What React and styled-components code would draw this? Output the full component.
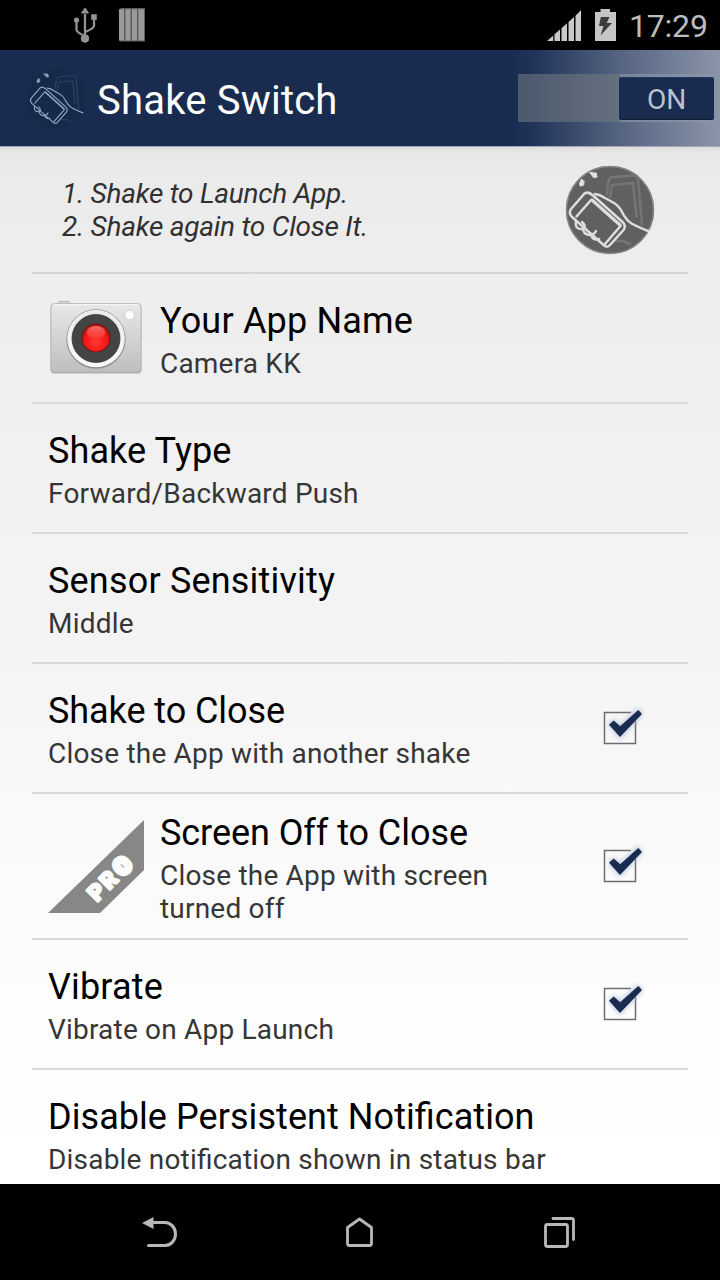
import React from 'react';
import styled, { createGlobalStyle } from 'styled-components';

const GlobalStyle = createGlobalStyle`
  * { box-sizing: border-box; }
  body { margin: 0; background: #000; }
  svg { display: block; flex: none; }
`;

const Screen = styled.div`
  width: 720px;
  height: 1280px;
  overflow: hidden;
  display: flex;
  flex-direction: column;
  font-family: Roboto, "Noto Sans", sans-serif;
  font-feature-settings: "liga" 1;
  background: #000;
`;

const StatusBar = styled.header`
  height: 50px;
  flex: none;
  display: flex;
  align-items: center;
  justify-content: space-between;
  padding: 0 12px 0 73px;
`;

const StatusGroup = styled.div`
  display: flex;
  align-items: center;
  gap: ${(p) => p.$gap}px;
`;

const Clock = styled.span`
  color: #bdbdbd;
  font-size: 32px;
  line-height: 48px;
  padding-top: 2px;
  width: 79px;
  white-space: nowrap;
  letter-spacing: -0.2px;
`;

const ActionBar = styled.div`
  height: 97px;
  flex: none;
  display: flex;
  align-items: center;
  background: #192c50;
  border-bottom: 1px solid #a3a5b4;
`;

const AppIcon = styled.div`
  margin-left: 24px;
  width: 64px;
  height: 64px;
`;

const AppTitle = styled.h1`
  margin: 6px 0 0 9px;
  flex: 1;
  color: #fff;
  font-size: 40px;
  font-weight: 400;
  line-height: 48px;
  white-space: nowrap;
  letter-spacing: 0.2px;
`;

const SwitchArea = styled.div`
  width: 208px;
  height: 96px;
  display: flex;
  align-items: center;
  padding-left: 6px;
  background: linear-gradient(90deg, #192c50 0%, #203358 10%, #536280 50%, #8b95a9 100%);
`;

const SwitchTrack = styled.div`
  width: 196px;
  height: 48px;
  display: flex;
  justify-content: flex-end;
  align-items: center;
  background: linear-gradient(90deg, #4b586d, #66717f 52%, #78859b 52%, #8b95a9);
`;

const SwitchThumb = styled.div`
  width: 95px;
  height: 43px;
  border-radius: 3px;
  background: #192c50;
  box-shadow: inset 0 -1px 0 #0f1c37, inset 0 1px 0 #213661;
  color: #bcc3cf;
  font-size: 28px;
  line-height: 46px;
  text-align: center;
`;

const Content = styled.main`
  flex: 1;
  min-height: 0;
  overflow: hidden;
  padding: 0 32px;
  background: linear-gradient(180deg, #dededf 0, #e8e8e8 6px, #ebebeb 30px, #f0f0f0 25%, #f4f4f4 48%, #f9f9f9 64%, #fdfdfd 82%, #fff 100%);
`;

const Intro = styled.section`
  height: 127px;
  display: flex;
  align-items: center;
  justify-content: space-between;
  padding: 0 32px 0 30px;
  border-bottom: 2px solid #d4d4d4;
`;

const IntroText = styled.p`
  margin: 0;
  color: #303030;
  font-size: 28px;
  font-style: italic;
  line-height: 33px;
  white-space: pre;
  letter-spacing: -0.25px;
`;

const Row = styled.section`
  height: ${(p) => p.$height || 130}px;
  display: flex;
  align-items: center;
  padding: 0 44px 0 16px;
  border-bottom: 2px solid #d9d9d9;
`;

const RowIcon = styled.div`
  width: 96px;
  height: 96px;
  margin-right: 16px;
  flex: none;
`;

const RowText = styled.div`
  flex: 1;
  min-width: 0;
  padding-top: ${(p) => p.$top ?? 2}px;
`;

const RowTitle = styled.h2`
  margin: 0;
  color: #000;
  font-size: 36px;
  font-weight: 400;
  line-height: 48px;
  white-space: nowrap;
  letter-spacing: ${(p) => p.$track || 0}px;
`;

const RowSummary = styled.p`
  margin: 0;
  color: #363636;
  font-size: 28px;
  line-height: 33px;
  padding: 2px 0;
  white-space: pre;
  letter-spacing: 0.2px;
`;

const NavBar = styled.nav`
  height: 96px;
  flex: none;
  display: flex;
  align-items: center;
  justify-content: space-between;
  padding: 0 136px 2px;
`;

const UsbIcon = () => (
  <svg width="24" height="36" viewBox="0 0 24 36" fill="#939393" stroke="#939393">
    <path d="M12 31V7M12 29Q4.500 26 3.500 23V13M12 25Q20 22 21 19V10" fill="none" stroke="#939393" strokeWidth="2.3" />
    <path d="M12 1l3.500 5h-7z" />
    <circle cx="12" cy="31.500" r="3.800" />
    <circle cx="3.500" cy="13" r="2.600" stroke="none" />
    <path d="M18.500 7.500h5v5h-5z" strokeWidth=".6" />
  </svg>
);

const BarsIcon = () => (
  <svg width="27" height="34" viewBox="0 0 27 34">
    <path d="M0 1.500L2 0h24v33.500H1.500L0 32z" fill="#5c5c5c" />
    <path d="M0 1.200h5v31.300H0zM6.500 1.200h5v31.300h-5zM13 1.200h5v31.300h-5zM19.500 1.200h5.500v31.300h-5.500z" fill="#999" />
  </svg>
);

const SignalIcon = () => (
  <svg width="35" height="31" viewBox="0 0 35 31" fill="#c9c9c9">
    <path d="M0 31L6.200 25.500V31zM7.500 31V24.300l5.500-4.800V31zM14.500 31V18.200L20 13.300V31zM21.500 31V12L27 7.100V31zM28.500 31V5.800L34 0v31z" />
  </svg>
);

const BatteryIcon = () => (
  <svg width="21" height="32" viewBox="0 0 21 32">
    <path d="M0 3h5.500V0h9.500v3H21v29H0z" fill="#c6c6c6" />
    <path d="M5.800 8h8.700l-2.800 6H17L5.500 26.500l3-9.500H4z" fill="#3c3c3c" />
  </svg>
);

const HandDrawing = ({ line, ghost, w }) => (
  <g fill="none" stroke={line} strokeLinecap="round" strokeLinejoin="round" strokeWidth={w}>
    <g stroke={ghost}>
      <path d="M43 30L44.500 17q.5-3.500 4-4L70 11.500q3.500 0 4 4L78 61M48 21l21-2M69 19l3.500 34M48 21l-2 12" />
      <path d="M51 77h8l7 3" />
    </g>
    <path d="M20.500 29.500L7 45q-2.500 4 .5 7.500L39 80.500q4 4 7 .5L59.500 66q3-4-1-8L29 31.500q-4.500-4.500-8.500-2z" />
    <path d="M27 36L12.500 52.500M56.500 62L41 80" />
    <path d="M28 36L56 61" strokeWidth={w * 1.3} />
    <path d="M31 30q5 .5 10 4l9 5q5 3 8 9 4 8 9.500 11.500Q74 63 84 67" />
    <path d="M12 57q-1.500 9 7 8 4-3-1-7M19 64q0 6 6 7 5 0 7-4M27 70q1 7 8 5" />
    <path d="M15.500 20l2-4.500 2.500 2-.5 3.500-3 1zM26 8.500l6 .5 1 4-3 .5z" fill={line} strokeWidth={w / 2} />
  </g>
);

const HeaderHand = () => (
  <svg width="64" height="64" viewBox="0 0 64 64">
    <circle cx="33" cy="33" r="30" fill="#172949" />
    <g transform="translate(2.500 2) scale(.67)">
      <HandDrawing line="#8ea5c8" ghost="#2b4168" w={1.700} />
    </g>
  </svg>
);

const GreyHand = () => (
  <svg width="92" height="92" viewBox="0 0 92 92">
    <circle cx="46" cy="46" r="44" fill="#606060" />
    <circle cx="46" cy="46" r="43.500" fill="none" stroke="#858585" strokeWidth="1.500" />
    <HandDrawing line="#dedede" ghost="#757575" w={2.500} />
  </svg>
);

const CameraIcon = () => (
  <svg width="96" height="96" viewBox="0 0 96 96">
    <defs>
      <linearGradient id="body" x1="0" y1="0" x2="0" y2="1">
        <stop offset="0" stopColor="#e8e8e8" />
        <stop offset="1" stopColor="#bebebe" />
      </linearGradient>
      <linearGradient id="ring" x1="0" y1="0" x2="0" y2="1">
        <stop offset="0" stopColor="#e9e9e9" />
        <stop offset="1" stopColor="#fbfbfb" />
      </linearGradient>
      <radialGradient id="lens" cx=".5" cy=".65" r=".6">
        <stop offset="0" stopColor="#ff3b30" />
        <stop offset=".65" stopColor="#f5181a" />
        <stop offset="1" stopColor="#bb1014" />
      </radialGradient>
      <linearGradient id="shine" x1="0" y1="0" x2="0" y2="1">
        <stop offset="0" stopColor="#ff9085" stopOpacity=".75" />
        <stop offset="1" stopColor="#ff6a60" stopOpacity=".2" />
      </linearGradient>
    </defs>
    <rect x="10" y="11.500" width="12" height="4" rx="2" fill="#d8d8d8" stroke="#aaa" strokeWidth=".8" />
    <rect x="2.500" y="14" width="91" height="69.500" rx="3.500" fill="#b0b0b0" />
    <rect x="3" y="13.500" width="90" height="68.500" rx="3.500" fill="url(#body)" stroke="#b4b4b4" strokeWidth=".8" />
    <path d="M6 14.700h84" stroke="#f8f8f8" />
    <circle cx="48" cy="49" r="29.700" fill="#8e8e8e" />
    <circle cx="48" cy="48.500" r="28.800" fill="url(#ring)" />
    <circle cx="48" cy="48.500" r="24" fill="#434545" stroke="#363636" strokeWidth=".8" />
    <circle cx="48" cy="48" r="14.500" fill="#6b1518" />
    <circle cx="48" cy="48" r="13.600" fill="url(#lens)" />
    <ellipse cx="48" cy="42.500" rx="9.500" ry="6.500" fill="url(#shine)" />
    <circle cx="81.500" cy="25" r="5" fill="#fbfbfb" stroke="#c4c4c4" strokeWidth=".8" />
  </svg>
);

const ProIcon = () => (
  <svg width="96" height="96" viewBox="0 0 96 96">
    <path d="M0 95L96 2v50L52 95z" fill="#878787" />
    <text
      transform="translate(49 84.500) rotate(-45)"
      fill="#fbfbfb"
      stroke="#fbfbfb"
      strokeWidth="2.500"
      strokeLinejoin="round"
      fontFamily="Roboto"
      fontWeight="900"
      fontSize="22.500"
    >
      P<tspan x="17">R</tspan><tspan x="36" strokeWidth="5">O</tspan>
    </text>
  </svg>
);

const CheckBox = () => (
  <svg width="46" height="48" viewBox="0 0 46 48">
    <defs>
      <filter id="glow" x="-30%" y="-30%" width="160%" height="160%">
        <feGaussianBlur stdDeviation="2.500" />
      </filter>
    </defs>
    <path d="M33 8.500H6.500v31h31V17" fill="none" stroke="#6e6e6e" strokeWidth="1.500" />
    <path d="M10 20l6-5 6 6L40 4l5 6-23 25z" fill="#9fb0d0" opacity=".7" filter="url(#glow)" />
    <path d="M11 20.800l4.700-4.300 6.500 5.800L40.300 6l3.700 4L22 33z" fill="#192c50" />
  </svg>
);

const BackIcon = () => (
  <svg width="48" height="48" viewBox="0 0 48 48">
    <path d="M18 15.500h11a10.500 11.500 0 0 1 0 23H12.500" fill="none" stroke="#b8b8b8" strokeWidth="3" strokeLinecap="round" />
    <path d="M6 16L17.500 10v12z" fill="#b8b8b8" />
  </svg>
);

const HomeIcon = () => (
  <svg width="48" height="48" viewBox="0 0 48 48">
    <path d="M11.500 20.500L23.500 12l12 8.500v16q0 2-2 2h-20q-2 0-2-2z" fill="none" stroke="#b8b8b8" strokeWidth="2.800" strokeLinejoin="round" />
  </svg>
);

const RecentsIcon = () => (
  <svg width="48" height="48" viewBox="0 0 48 48" fill="none" stroke="#b8b8b8" strokeWidth="2.800" strokeLinecap="round">
    <rect x="9.500" y="17.500" width="22" height="22" rx="2" />
    <path d="M17 11.500h18.500q2 0 2 2V32.500" />
  </svg>
);

const settings = [
  { title: 'Your App Name', titleTrack: 0.18, summary: 'Camera KK', icon: <CameraIcon /> },
  { title: 'Shake Type', titleTrack: 0.1, summary: 'Forward/Backward Push' },
  { title: 'Sensor Sensitivity', titleTrack: 0.19, summary: 'Middle' },
  { title: 'Shake to Close', titleTrack: -0.07, summary: 'Close the App with another shake', checked: true },
  { title: 'Screen Off to Close', titleTrack: -0.06, summary: 'Close the App with screen\nturned off', icon: <ProIcon />, checked: true, height: 146, top: 4 },
  { title: 'Vibrate', titleTrack: 0.15, summary: 'Vibrate on App Launch', checked: true },
  { title: 'Disable Persistent Notification', titleTrack: 0.06, summary: 'Disable notification shown in status bar' },
];

export default function App() {
  return (
    <Screen>
      <GlobalStyle />
      <StatusBar>
        <StatusGroup $gap={22}>
          <UsbIcon />
          <BarsIcon />
        </StatusGroup>
        <StatusGroup $gap={13}>
          <SignalIcon />
          <BatteryIcon />
          <Clock>17:29</Clock>
        </StatusGroup>
      </StatusBar>
      <ActionBar>
        <AppIcon><HeaderHand /></AppIcon>
        <AppTitle>Shake Switch</AppTitle>
        <SwitchArea>
          <SwitchTrack>
            <SwitchThumb>ON</SwitchThumb>
          </SwitchTrack>
        </SwitchArea>
      </ActionBar>
      <Content>
        <Intro>
          <IntroText>{'1. Shake to Launch App.\n2. Shake again to Close It.'}</IntroText>
          <GreyHand />
        </Intro>
        {settings.map((s) => (
          <Row key={s.title} $height={s.height}>
            {s.icon && <RowIcon>{s.icon}</RowIcon>}
            <RowText $top={s.top}>
              <RowTitle $track={s.titleTrack}>{s.title}</RowTitle>
              <RowSummary>{s.summary}</RowSummary>
            </RowText>
            {s.checked && <CheckBox />}
          </Row>
        ))}
      </Content>
      <NavBar>
        <BackIcon />
        <HomeIcon />
        <RecentsIcon />
      </NavBar>
    </Screen>
  );
}
